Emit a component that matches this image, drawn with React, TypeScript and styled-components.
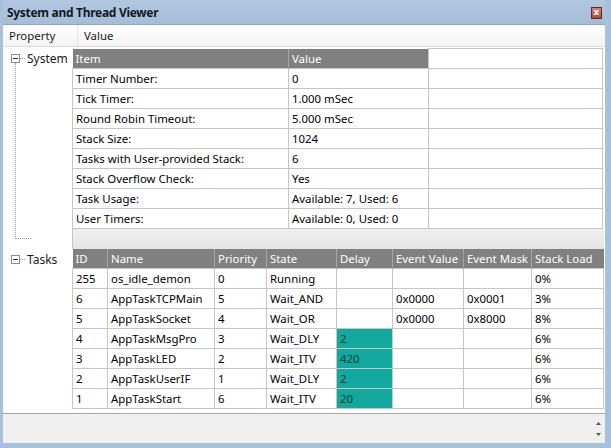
import React from 'react';
import styled, { createGlobalStyle } from 'styled-components';

const GlobalStyle = createGlobalStyle`
  html, body {
    margin: 0;
    padding: 0;
    background: #ffffff;
  }
  body {
    font-family: "Noto Sans", "Liberation Sans", sans-serif;
    font-size: 11.4px;
    color: #000000;
  }
`;

const FRAME = '#a9c0db';
const GRID = '#c6c6c6';
const HEAD = '#808080';
const TEAL = '#13a89d';

type SysRow = [string, string];

const systemRows: SysRow[] = [
  ['Timer Number:', '0'],
  ['Tick Timer:', '1.000 mSec'],
  ['Round Robin Timeout:', '5.000 mSec'],
  ['Stack Size:', '1024'],
  ['Tasks with User-provided Stack:', '6'],
  ['Stack Overflow Check:', 'Yes'],
  ['Task Usage:', 'Available: 7, Used: 6'],
  ['User Timers:', 'Available: 0, Used: 0'],
];

type Task = {
  id: string;
  name: string;
  priority: string;
  state: string;
  delay: string;
  eventValue: string;
  eventMask: string;
  stackLoad: string;
};

const tasks: Task[] = [
  { id: '255', name: 'os_idle_demon', priority: '0', state: 'Running', delay: '', eventValue: '', eventMask: '', stackLoad: '0%' },
  { id: '6', name: 'AppTaskTCPMain', priority: '5', state: 'Wait_AND', delay: '', eventValue: '0x0000', eventMask: '0x0001', stackLoad: '3%' },
  { id: '5', name: 'AppTaskSocket', priority: '4', state: 'Wait_OR', delay: '', eventValue: '0x0000', eventMask: '0x8000', stackLoad: '8%' },
  { id: '4', name: 'AppTaskMsgPro', priority: '3', state: 'Wait_DLY', delay: '2', eventValue: '', eventMask: '', stackLoad: '6%' },
  { id: '3', name: 'AppTaskLED', priority: '2', state: 'Wait_ITV', delay: '420', eventValue: '', eventMask: '', stackLoad: '6%' },
  { id: '2', name: 'AppTaskUserIF', priority: '1', state: 'Wait_DLY', delay: '2', eventValue: '', eventMask: '', stackLoad: '6%' },
  { id: '1', name: 'AppTaskStart', priority: '6', state: 'Wait_ITV', delay: '20', eventValue: '', eventMask: '', stackLoad: '6%' },
];

const taskColumns = [
  { label: 'ID', width: 35 },
  { label: 'Name', width: 107 },
  { label: 'Priority', width: 52 },
  { label: 'State', width: 70 },
  { label: 'Delay', width: 56 },
  { label: 'Event Value', width: 71 },
  { label: 'Event Mask', width: 68 },
  { label: 'Stack Load', width: 72 },
];

function App() {
  return (
    <>
      <GlobalStyle />
      <Window>
        <TitleBar>
          <Title>System and Thread Viewer</Title>
          <CloseButton>x</CloseButton>
        </TitleBar>
        <Client>
          <PropHeader>
            <PropCell $width={68}>Property</PropCell>
            <PropCell>Value</PropCell>
          </PropHeader>
          <Body>
            <Tree>
              <TreeNode>
                <Expander />
                <Connector />
                <NodeLabel>System</NodeLabel>
              </TreeNode>
              <Branch />
              <TreeNode $top={10}>
                <Expander />
                <Connector />
                <NodeLabel>Tasks</NodeLabel>
              </TreeNode>
            </Tree>
            <Content>
              <Grid>
                <colgroup>
                  <col style={{ width: 216 }} />
                  <col style={{ width: 140 }} />
                  <col />
                </colgroup>
                <thead>
                  <tr>
                    <HeadCell>Item</HeadCell>
                    <HeadCell>Value</HeadCell>
                    <Cell />
                  </tr>
                </thead>
                <tbody>
                  {systemRows.map(([item, value]) => (
                    <tr key={item}>
                      <Cell>{item}</Cell>
                      <Cell>{value}</Cell>
                      <Cell />
                    </tr>
                  ))}
                </tbody>
              </Grid>
              <Band />
              <Grid>
                <colgroup>
                  {taskColumns.map((c) => (
                    <col key={c.label} style={{ width: c.width }} />
                  ))}
                </colgroup>
                <thead>
                  <tr>
                    {taskColumns.map((c) => (
                      <HeadCell key={c.label}>{c.label}</HeadCell>
                    ))}
                  </tr>
                </thead>
                <tbody>
                  {tasks.map((t) => (
                    <tr key={t.id}>
                      <Cell>{t.id}</Cell>
                      <Cell>{t.name}</Cell>
                      <Cell>{t.priority}</Cell>
                      <Cell>{t.state}</Cell>
                      <Cell $active={t.delay !== ''}>{t.delay}</Cell>
                      <Cell>{t.eventValue}</Cell>
                      <Cell>{t.eventMask}</Cell>
                      <Cell>{t.stackLoad}</Cell>
                    </tr>
                  ))}
                </tbody>
              </Grid>
            </Content>
          </Body>
          <Footer>
            <Spinner>
              <svg width="7" height="20" viewBox="0 0 7 20">
                <path d="M3.5 3 L6 6 L1 6 Z" fill="#555" />
                <path d="M3.5 17 L6 14 L1 14 Z" fill="#555" />
              </svg>
            </Spinner>
          </Footer>
        </Client>
      </Window>
    </>
  );
}

export default App;

const Window = styled.div`
  width: 611px;
  height: 448px;
  box-sizing: border-box;
  background: ${FRAME};
  padding: 0 6px 5px 3px;
  display: flex;
  flex-direction: column;
`;

const TitleBar = styled.div`
  height: 24px;
  flex: none;
  display: flex;
  align-items: center;
  justify-content: space-between;
  padding: 0 3px 0 4px;
  background: linear-gradient(#b2c8e2, #a5bdd9);
  border-bottom: 1px solid #8ea6c2;
`;

const Title = styled.div`
  font-weight: bold;
  font-size: 12px;
  color: #101820;
  letter-spacing: -0.3px;
`;

const CloseButton = styled.div`
  width: 9px;
  height: 10px;
  margin-top: 2px;
  border: 1px solid #5b2a22;
  background: linear-gradient(#d7826f, #b04a38);
  color: #ffffff;
  font-size: 9px;
  font-weight: bold;
  line-height: 8px;
  text-align: center;
  font-family: "DejaVu Sans", sans-serif;
`;

const Client = styled.div`
  flex: 1;
  display: flex;
  flex-direction: column;
  background: #ffffff;
  min-height: 0;
`;

const PropHeader = styled.div`
  height: 21px;
  flex: none;
  display: flex;
  background: linear-gradient(#ffffff, #f3f3f3);
  border-bottom: 1px solid #d9d9d9;
`;

const PropCell = styled.div<{ $width?: number }>`
  ${(p) => (p.$width ? `width: ${p.$width}px;` : 'flex: 1;')}
  padding-left: 6px;
  line-height: 21px;
  color: #1a1a1a;
  border-right: ${(p) => (p.$width ? '1px solid #e3e3e3' : 'none')};
`;

const Body = styled.div`
  flex: 1;
  display: flex;
  min-height: 0;
`;

const Tree = styled.div`
  width: 69px;
  flex: none;
  padding-top: 1px;
  display: flex;
  flex-direction: column;
`;

const TreeNode = styled.div<{ $top?: number }>`
  height: 20px;
  margin-top: ${(p) => p.$top ?? 0}px;
  display: flex;
  align-items: center;
  padding-left: 8px;
`;

const Expander = styled.div`
  position: relative;
  width: 7px;
  height: 7px;
  border: 1px solid #8c8c8c;
  background: #ffffff;
  flex: none;

  &::after {
    content: '';
    position: absolute;
    left: 1px;
    right: 1px;
    top: 3px;
    height: 1px;
    background: #333333;
  }
`;

const Connector = styled.div`
  width: 5px;
  border-top: 1px dotted #9a9a9a;
`;

const NodeLabel = styled.span`
  margin-left: 2px;
  color: #1a1a1a;
  font-size: 12px;
`;

const Branch = styled.div`
  margin-left: 12px;
  margin-top: -5px;
  width: 15px;
  height: 175px;
  border-left: 1px dotted #9a9a9a;
  border-bottom: 1px dotted #9a9a9a;
`;

const Content = styled.div`
  flex: 1;
  padding: 1px 2px 0 0;
  display: flex;
  flex-direction: column;
`;

const Grid = styled.table`
  width: 531px;
  border-collapse: collapse;
  table-layout: fixed;
`;

const HeadCell = styled.th`
  height: 19px;
  padding: 0 0 0 3px;
  background: ${HEAD};
  color: #ffffff;
  font-weight: normal;
  text-align: left;
  border-left: 1px solid #a4a4a4;
  white-space: nowrap;
  overflow: hidden;

  &:first-child {
    border-left: none;
  }
`;

const Cell = styled.td<{ $active?: boolean }>`
  height: 19px;
  padding: 0 0 0 3px;
  border: 1px solid ${GRID};
  background: ${(p) => (p.$active ? TEAL : '#ffffff')};
  color: ${(p) => (p.$active ? '#0c3c38' : '#000000')};
  white-space: nowrap;
  overflow: hidden;
`;

const Band = styled.div`
  height: 20px;
  background: linear-gradient(#efefef, #e6e6e6);
  border-left: 1px solid ${GRID};
`;

const Footer = styled.div`
  height: 29px;
  flex: none;
  margin-top: auto;
  background: #f0f0f0;
  border-top: 1px solid #a8a8a8;
  display: flex;
  justify-content: flex-end;
  align-items: center;
  padding-right: 3px;
`;

const Spinner = styled.div`
  display: flex;
  align-items: center;
`;
